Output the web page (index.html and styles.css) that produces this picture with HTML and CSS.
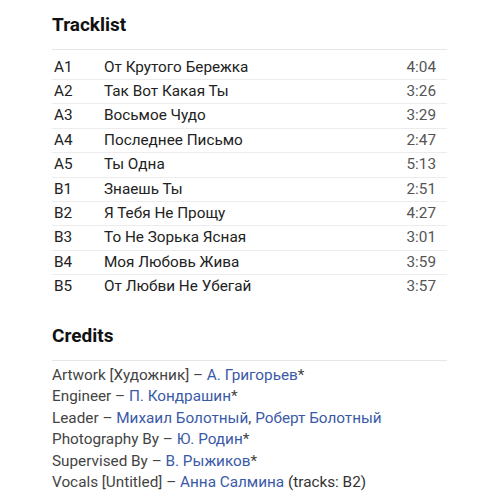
FILE: index.html
```html
<!DOCTYPE html>
<html lang="ru">
<head>
<meta charset="utf-8">
<link rel="stylesheet" href="styles.css">
</head>
<body>
<main class="page">
  <section class="tracklist">
    <h2 class="section-title">Tracklist</h2>
    <div class="tracks">
      <div class="track"><span class="pos">A1</span><span class="title">От Крутого Бережка</span><span class="dur">4:04</span></div>
      <div class="track"><span class="pos">A2</span><span class="title">Так Вот Какая Ты</span><span class="dur">3:26</span></div>
      <div class="track"><span class="pos">A3</span><span class="title">Восьмое Чудо</span><span class="dur">3:29</span></div>
      <div class="track"><span class="pos">A4</span><span class="title">Последнее Письмо</span><span class="dur">2:47</span></div>
      <div class="track"><span class="pos">A5</span><span class="title">Ты Одна</span><span class="dur">5:13</span></div>
      <div class="track"><span class="pos">B1</span><span class="title">Знаешь Ты</span><span class="dur">2:51</span></div>
      <div class="track"><span class="pos">B2</span><span class="title">Я Тебя Не Прощу</span><span class="dur">4:27</span></div>
      <div class="track"><span class="pos">B3</span><span class="title">То Не Зорька Ясная</span><span class="dur">3:01</span></div>
      <div class="track"><span class="pos">B4</span><span class="title">Моя Любовь Жива</span><span class="dur">3:59</span></div>
      <div class="track"><span class="pos">B5</span><span class="title">От Любви Не Убегай</span><span class="dur">3:57</span></div>
    </div>
  </section>
  <section class="credits">
    <h2 class="section-title">Credits</h2>
    <ul class="credit-list">
      <li>Artwork [Художник] – <a class="artist">А. Григорьев</a>*</li>
      <li>Engineer – <a class="artist">П. Кондрашин</a>*</li>
      <li>Leader – <a class="artist">Михаил Болотный</a>, <a class="artist">Роберт Болотный</a></li>
      <li>Photography By – <a class="artist">Ю. Родин</a>*</li>
      <li>Supervised By – <a class="artist">В. Рыжиков</a>*</li>
      <li>Vocals [Untitled] – <a class="artist">Анна Салмина</a> <span class="note">(tracks: B2)</span></li>
    </ul>
  </section>
</main>
</body>
</html>
```

FILE: styles.css
```css
html, body {
  margin: 0;
  padding: 0;
  background: #ffffff;
}

body {
  font-family: Roboto, "Liberation Sans", sans-serif;
  color: #222;
}

.page {
  width: 395px;
  margin-left: 52px;
}

.section-title {
  margin: 13px 0 0;
  padding-bottom: 11.6px;
  font-size: 19px;
  line-height: 24px;
  font-weight: 700;
  color: #111;
  border-bottom: 1px solid #e6e6e6;
}

.tracks {
  margin-top: 6px;
}

.track {
  display: flex;
  align-items: center;
  height: 23.4px;
  font-size: 15.3px;
  line-height: 23.4px;
  border-bottom: 1px solid #ececec;
}

.track:last-child {
  border-bottom: none;
}

.pos {
  width: 50px;
  padding-left: 2px;
  color: #222;
}

.title {
  flex: 1;
  color: #222;
}

.dur {
  padding-right: 11px;
  color: #555;
}

.credits {
  margin-top: 25.5px;
}

.credit-list {
  list-style: none;
  margin: 4px 0 0;
  padding: 0;
  font-size: 15.3px;
  line-height: 21.5px;
  color: #444;
}

.artist {
  color: #3a5aa8;
  text-decoration: none;
}

.note {
  color: #333;
}
```
